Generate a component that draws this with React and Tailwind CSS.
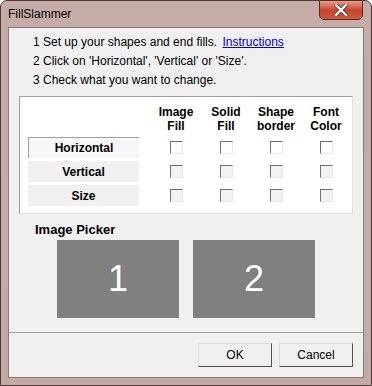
import { useState } from 'react';

const ui = { fontFamily: '"Liberation Sans", Arial, sans-serif' };

const columns = [
  ['Image', 'Fill'],
  ['Solid', 'Fill'],
  ['Shape', 'border'],
  ['Font', 'Color'],
];

const rows = ['Horizontal', 'Vertical', 'Size'];

// Petite case à cocher style Windows classique
const Check = ({ checked, onChange, disabled }) => (
  <button
    type="button"
    onClick={onChange}
    className={
      'w-[13px] h-[13px] border-t border-l border-t-[#707070] border-l-[#707070] border-r border-b border-r-[#e8e8e8] border-b-[#e8e8e8] ' +
      (disabled ? 'bg-[#f2f2f2]' : 'bg-white')
    }
  >
    {checked && <span className="block text-[10px] leading-[11px] text-black">✓</span>}
  </button>
);

const App = () => {
  const [active, setActive] = useState('Horizontal');
  const [checks, setChecks] = useState({});

  const toggle = (r, c) => {
    const key = r + '-' + c;
    setChecks({ ...checks, [key]: !checks[key] });
  };

  return (
    <div style={ui} className="w-[372px] h-[386px] bg-white">
      <div className="w-full h-full flex flex-col rounded-t-[7px] border border-[#4a3a3a] bg-gradient-to-b from-[#c6aca8] to-[#c3aaa6] relative">
        {/* barre de titre */}
        <div className="h-[26px] flex items-center pl-[7px]">
          <span className="text-[12px] text-black">FillSlammer</span>
        </div>
        <button
          type="button"
          className="absolute right-[8px] top-[-1px] w-[44px] h-[20px] rounded-b-[5px] border border-[#5a2a22] bg-gradient-to-b from-[#e4a08e] via-[#c7452f] to-[#d0573b] flex items-center justify-center"
        >
          <svg width="14" height="12" viewBox="0 0 14 12">
            <path d="M2 1 L12 11 M12 1 L2 11" stroke="#5a2a22" strokeWidth="4" strokeLinecap="square" />
            <path d="M2 1 L12 11 M12 1 L2 11" stroke="#fff" strokeWidth="2.4" strokeLinecap="square" />
          </svg>
        </button>

        {/* zone client */}
        <div className="mx-[7px] flex-1 mb-[7px] bg-[#f0f0f0] border border-[#8a7a78] flex flex-col">
          <div className="pl-[24px] pt-[5px] text-[12px] text-black leading-[19px]">
            <p>
              1 Set up your shapes and end fills.{' '}
              <a href="#" className="text-[#0000cc] underline ml-[2px]">Instructions</a>
            </p>
            <p>2 Click on 'Horizontal', 'Vertical' or 'Size'.</p>
            <p>3 Check what you want to change.</p>
          </div>

          <div className="mx-[10px] mt-[6px] h-[118px] bg-white border border-[#a0a0a0] border-r-[#e0e0e0] border-b-[#e0e0e0] pl-[8px] pt-[8px]">
            <div className="flex">
              <div className="w-[123px]" />
              <div className="flex">
                {columns.map((c) => (
                  <div key={c[0]} className="w-[50px] text-center text-[12px] font-bold leading-[14px] text-black">
                    {c[0]}
                    <br />
                    {c[1]}
                  </div>
                ))}
              </div>
            </div>
            <div className="flex flex-col gap-[3px] mt-[4px]">
              {rows.map((r) => (
                <div key={r} className="flex items-center">
                  <button
                    type="button"
                    onClick={() => setActive(r)}
                    className={
                      'w-[111px] h-[21px] mr-[12px] text-[12px] font-bold text-black ' +
                      (active === r
                        ? 'border-t border-l border-[#a0a0a0] border-r-white border-b-white bg-[#f6f6f6]'
                        : 'bg-[#f0f0f0]')
                    }
                  >
                    {r}
                  </button>
                  <div className="flex">
                    {columns.map((c) => (
                      <div key={c[0]} className="w-[50px] flex justify-center">
                        <Check
                          checked={!!checks[r + '-' + c[0]]}
                          onChange={() => toggle(r, c[0])}
                          disabled={active !== r}
                        />
                      </div>
                    ))}
                  </div>
                </div>
              ))}
            </div>
          </div>

          <div className="pl-[26px] pt-[6px] text-[13px] font-bold text-black">Image Picker</div>
          <div className="flex gap-[14px] pl-[48px]">
            <div className="w-[122px] h-[78px] bg-[#808080] flex items-center justify-center text-white text-[36px]">1</div>
            <div className="w-[122px] h-[78px] bg-[#808080] flex items-center justify-center text-white text-[36px]">2</div>
          </div>

          <div className="mt-auto h-[45px] border-t border-[#a0a0a0] flex justify-end items-center gap-[7px] pr-[10px]">
            <button
              type="button"
              className="w-[74px] h-[24px] bg-[#f0f0f0] border border-[#dcdcdc] border-r-[#505050] border-b-[#505050] text-[12px] text-black"
            >
              OK
            </button>
            <button
              type="button"
              className="w-[74px] h-[24px] bg-[#f0f0f0] border border-[#dcdcdc] border-r-[#505050] border-b-[#505050] text-[12px] text-black"
            >
              Cancel
            </button>
          </div>
        </div>
      </div>
    </div>
  );
};

export default App;
